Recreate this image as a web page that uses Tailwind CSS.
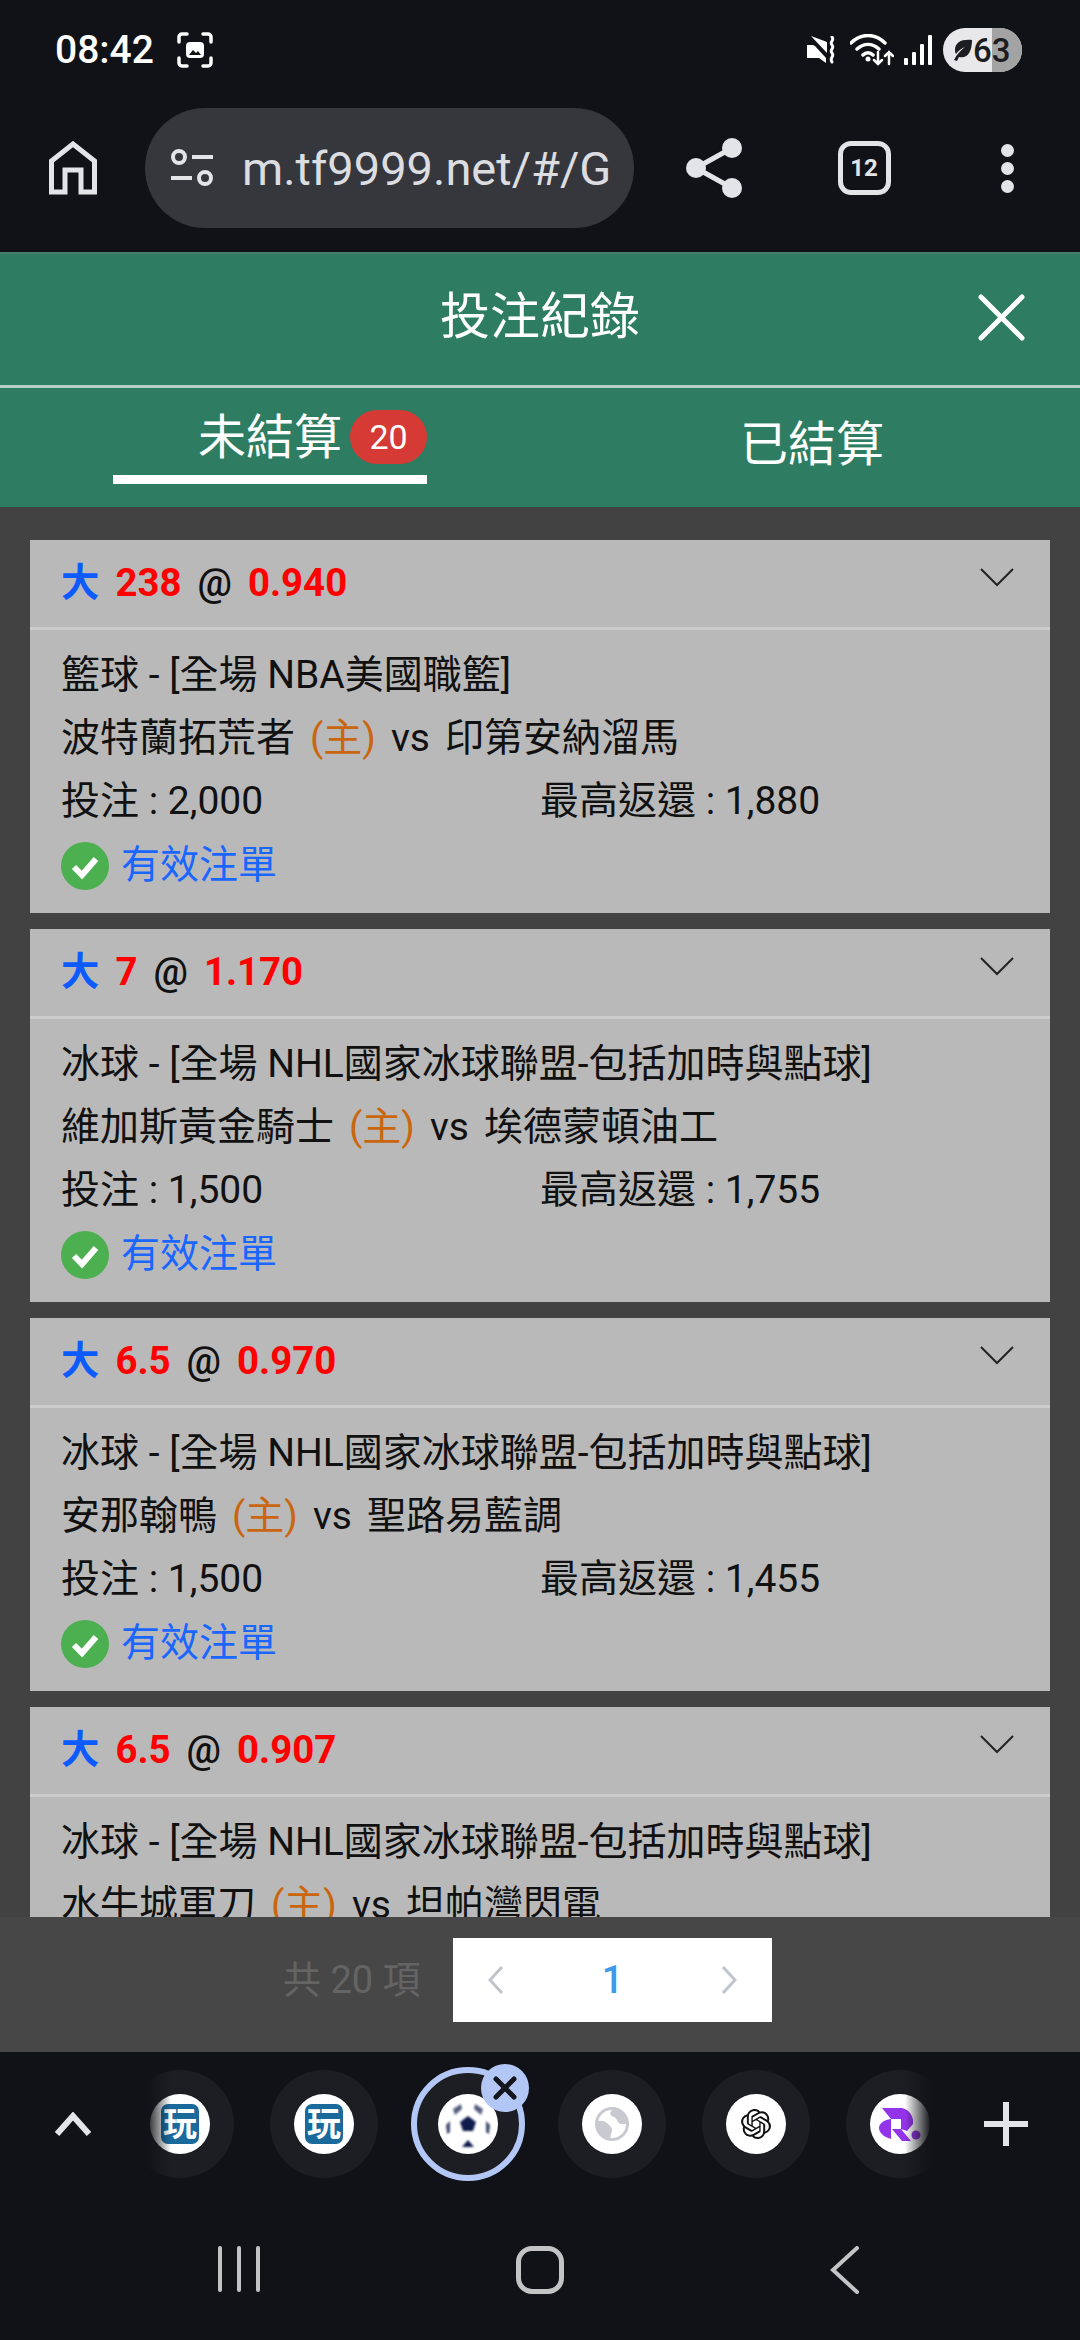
<!DOCTYPE html>
<html lang="zh-Hant">
<head>
  <meta charset="UTF-8" />
  <meta name="viewport" content="width=device-width, initial-scale=1.0"/>
  <title>投注紀錄</title>
  <script src="https://cdn.jsdelivr.net/npm/@tailwindcss/browser@4"></script>
</head>
<body class="bg-[#101217] font-['Roboto','Noto_Sans_CJK_TC',sans-serif]">
<div class="w-[1080px] h-[2340px] flex flex-col overflow-hidden">

  <!-- status bar -->
  <div class="h-[92px] shrink-0 flex items-start justify-between pt-[28px] pl-[55px] pr-[58px] text-white">
    <div class="flex items-center gap-[23px] h-[44px]">
      <span class="text-[39px] font-medium leading-none">08:42</span>
      <svg class="w-[36px] h-[36px]" viewBox="0 0 36 36" fill="none" stroke="#fff" stroke-width="3.5" stroke-linecap="round">
        <path d="M2 10V5a3 3 0 0 1 3-3h5M26 2h5a3 3 0 0 1 3 3v5M34 26v5a3 3 0 0 1-3 3h-5M10 34H5a3 3 0 0 1-3-3v-5"/>
        <rect x="9" y="10" width="18" height="16" rx="4" fill="#fff" stroke="none"/>
        <path d="M12 23l4-5 3 3 2-2 3 4z" fill="#101217" stroke="none"/>
      </svg>
    </div>
    <div class="flex items-center h-[44px]">
      <svg class="w-[31px] h-[28px] mr-[12px]" viewBox="0 0 31 28" fill="#fff">
        <path d="M0 9h6l2 1 11 12v5l-7-5H0z"/><path d="M4 0l16 17V6z"/>
        <path d="M25 1c3 3-3 5 0 8s-3 5 0 8-3 5 0 9" fill="none" stroke="#fff" stroke-width="3" stroke-linecap="round"/>
      </svg>
      <svg class="w-[44px] h-[32px] mr-[10px]" viewBox="0 0 44 32" fill="none" stroke="#fff" stroke-width="3.5" stroke-linecap="round">
        <path d="M1 9c10-10 24-10 34 0M7 15c7-6 15-6 22 0M13 21c3-3 7-3 10 0"/>
        <circle cx="18" cy="25" r="2.5" fill="#fff" stroke="none"/>
        <path stroke-width="2.5" d="M28 18v12m-4-4l4 4 4-4M39 30V18m-4 4l4-4 4 4"/>
      </svg>
      <svg class="w-[28px] h-[30px] mr-[11px]" viewBox="0 0 28 30" fill="#fff">
        <rect x="0" y="23" width="4" height="7" rx="1"/><rect x="8" y="17" width="4" height="13" rx="1"/>
        <rect x="16" y="9" width="4" height="21" rx="1"/><rect x="24" y="0" width="4" height="30" rx="1"/>
      </svg>
      <div class="relative w-[79px] h-[44px] rounded-full overflow-hidden bg-[#e8e8ea] flex items-center">
        <div class="absolute right-0 inset-y-0 w-[30px] bg-[#a3a3a3]"></div>
        <svg class="relative ml-[7px] w-[22px] h-[22px]" viewBox="0 0 22 22" fill="#1c1d20">
          <path d="M22 1C12 0 5 3 5 11c0 2 .5 3 1 4 3-4 6-6 9-7-4 3-8 7-11 13l3 1 2-4c9 2 13-6 13-17z"/>
        </svg>
        <span class="relative ml-[1px] text-[#1c1d20] text-[33px] font-medium leading-none">63</span>
      </div>
    </div>
  </div>

  <!-- browser toolbar -->
  <div class="h-[160px] shrink-0 flex items-center pb-[8px]">
    <div class="w-[145px] flex justify-center">
      <svg class="w-[48px] h-[54px]" viewBox="0 0 48 54" fill="none" stroke="#e3e4e8" stroke-width="5">
        <path d="M2.500 51V20L24 3l21.500 17v31H32V29H16v22z"/>
      </svg>
    </div>
    <div class="w-[489px] h-[120px] rounded-full bg-[#36373c] flex items-center pl-[25px] overflow-hidden">
      <svg class="w-[44px] h-[40px] shrink-0" viewBox="0 0 44 40" fill="none" stroke="#e3e4e8" stroke-width="4">
        <circle cx="9" cy="9" r="6"/><path d="M22 9h21M1 30h21"/><circle cx="35" cy="30" r="6"/>
      </svg>
      <span class="ml-[28px] text-[#dcdde1] text-[47px] whitespace-nowrap leading-none">m.tf9999.net/#/G</span>
    </div>
    <div class="w-[160px] flex justify-center">
      <svg class="w-[56px] h-[60px]" viewBox="0 0 56 60" fill="#e3e4e8">
        <circle cx="10" cy="30" r="10"/><circle cx="46" cy="10" r="10"/><circle cx="46" cy="50" r="10"/>
        <path d="M10 30L46 10M10 30l36 20" stroke="#e3e4e8" stroke-width="5"/>
      </svg>
    </div>
    <div class="w-[140px] flex justify-center">
      <div class="w-[53px] h-[54px] rounded-[13px] border-[5px] border-[#e3e4e8] flex items-center justify-center text-[#e3e4e8] text-[24px] font-bold leading-none">12</div>
    </div>
    <div class="w-[146px] flex flex-col items-center gap-[5px]">
      <div class="w-[13px] h-[13px] rounded-full bg-[#e3e4e8]"></div>
      <div class="w-[13px] h-[13px] rounded-full bg-[#e3e4e8]"></div>
      <div class="w-[13px] h-[13px] rounded-full bg-[#e3e4e8]"></div>
    </div>
  </div>

  <!-- page header -->
  <div class="h-[133px] shrink-0 bg-[#2e7d62] border-t-[2px] border-[#47806c] flex items-center relative">
    <h1 class="w-full text-center text-white text-[50px] font-normal leading-none -mt-[6px]">投注紀錄</h1>
    <svg class="absolute right-[55px] top-[40px] w-[47px] h-[47px]" viewBox="0 0 47 47" stroke="#fff" stroke-width="5" stroke-linecap="round">
      <path d="M3 3l41 41M44 3L3 44"/>
    </svg>
  </div>
  <div class="h-[3px] shrink-0 bg-[#b6cfc6]"></div>

  <!-- tabs -->
  <div class="h-[119px] shrink-0 bg-[#2e7d62] flex text-white text-[48px] leading-none">
    <div class="relative ml-[113px] w-[314px] h-[96px] border-b-[9px] border-white flex items-start pl-[85px] pt-[25px]">
      <span class="leading-[50px]">未結算</span>
      <span class="ml-[8px] -mt-[3px] w-[77px] h-[54px] rounded-[27px] bg-[#d63a35] text-[34px] flex items-center justify-center">20</span>
    </div>
    <div class="ml-[313px] pt-[32px] leading-[50px]">已結算</div>
  </div>

  <!-- bet list -->
  <div class="flex-1 bg-[#424242] overflow-hidden min-h-0">
    <div class="px-[30px] pt-[33px] flex flex-col gap-[16px] text-[39px] text-[#111] leading-none">

      <div class="h-[373px] shrink-0 bg-[#b9b9b9]">
        <div class="h-[90px] border-b-[3px] border-[#cbcbcb] flex items-center justify-between pl-[31px] pr-[36px] font-bold">
          <div class="flex gap-[16px] text-[38.400px]"><span class="text-[#0d5bff]">大</span><span class="text-[#ff0000]">238</span><span class="text-[#111] font-medium">@</span><span class="text-[#ff0000]">0.940</span></div>
          <svg class="w-[34px] h-[19px] -mt-[12px]" viewBox="0 0 34 19" fill="none" stroke="#222" stroke-width="2"><path d="M1 1l16 16L33 1"/></svg>
        </div>
        <div class="pl-[31px] pt-[14px]">
          <div class="h-[63px] flex items-center whitespace-pre">籃球 - [全場 NBA美國職籃]</div>
          <div class="h-[63px] flex items-center gap-[15px]"><span>波特蘭拓荒者</span><span class="text-[#c9660f]">(主)</span><span>vs</span><span>印第安納溜馬</span></div>
          <div class="h-[63px] flex items-center whitespace-pre"><span class="w-[479px]">投注 : 2,000</span><span>最高返還 : 1,880</span></div>
          <div class="h-[65px] flex items-center gap-[12px] text-[#1a66ff]">
            <svg class="w-[48px] h-[48px]" viewBox="0 0 48 48"><circle cx="24" cy="24" r="24" fill="#4caf50"/><path d="M13 25l8 8 14-16" fill="none" stroke="#fff" stroke-width="6"/></svg>
            有效注單
          </div>
        </div>
      </div>

      <div class="h-[373px] shrink-0 bg-[#b9b9b9]">
        <div class="h-[90px] border-b-[3px] border-[#cbcbcb] flex items-center justify-between pl-[31px] pr-[36px] font-bold">
          <div class="flex gap-[16px] text-[38.400px]"><span class="text-[#0d5bff]">大</span><span class="text-[#ff0000]">7</span><span class="text-[#111] font-medium">@</span><span class="text-[#ff0000]">1.170</span></div>
          <svg class="w-[34px] h-[19px] -mt-[12px]" viewBox="0 0 34 19" fill="none" stroke="#222" stroke-width="2"><path d="M1 1l16 16L33 1"/></svg>
        </div>
        <div class="pl-[31px] pt-[14px]">
          <div class="h-[63px] flex items-center whitespace-pre">冰球 - [全場 NHL國家冰球聯盟-包括加時與點球]</div>
          <div class="h-[63px] flex items-center gap-[15px]"><span>維加斯黃金騎士</span><span class="text-[#c9660f]">(主)</span><span>vs</span><span>埃德蒙頓油工</span></div>
          <div class="h-[63px] flex items-center whitespace-pre"><span class="w-[479px]">投注 : 1,500</span><span>最高返還 : 1,755</span></div>
          <div class="h-[65px] flex items-center gap-[12px] text-[#1a66ff]">
            <svg class="w-[48px] h-[48px]" viewBox="0 0 48 48"><circle cx="24" cy="24" r="24" fill="#4caf50"/><path d="M13 25l8 8 14-16" fill="none" stroke="#fff" stroke-width="6"/></svg>
            有效注單
          </div>
        </div>
      </div>

      <div class="h-[373px] shrink-0 bg-[#b9b9b9]">
        <div class="h-[90px] border-b-[3px] border-[#cbcbcb] flex items-center justify-between pl-[31px] pr-[36px] font-bold">
          <div class="flex gap-[16px] text-[38.400px]"><span class="text-[#0d5bff]">大</span><span class="text-[#ff0000]">6.5</span><span class="text-[#111] font-medium">@</span><span class="text-[#ff0000]">0.970</span></div>
          <svg class="w-[34px] h-[19px] -mt-[12px]" viewBox="0 0 34 19" fill="none" stroke="#222" stroke-width="2"><path d="M1 1l16 16L33 1"/></svg>
        </div>
        <div class="pl-[31px] pt-[14px]">
          <div class="h-[63px] flex items-center whitespace-pre">冰球 - [全場 NHL國家冰球聯盟-包括加時與點球]</div>
          <div class="h-[63px] flex items-center gap-[15px]"><span>安那翰鴨</span><span class="text-[#c9660f]">(主)</span><span>vs</span><span>聖路易藍調</span></div>
          <div class="h-[63px] flex items-center whitespace-pre"><span class="w-[479px]">投注 : 1,500</span><span>最高返還 : 1,455</span></div>
          <div class="h-[65px] flex items-center gap-[12px] text-[#1a66ff]">
            <svg class="w-[48px] h-[48px]" viewBox="0 0 48 48"><circle cx="24" cy="24" r="24" fill="#4caf50"/><path d="M13 25l8 8 14-16" fill="none" stroke="#fff" stroke-width="6"/></svg>
            有效注單
          </div>
        </div>
      </div>

      <div class="h-[373px] shrink-0 bg-[#b9b9b9]">
        <div class="h-[90px] border-b-[3px] border-[#cbcbcb] flex items-center justify-between pl-[31px] pr-[36px] font-bold">
          <div class="flex gap-[16px] text-[38.400px]"><span class="text-[#0d5bff]">大</span><span class="text-[#ff0000]">6.5</span><span class="text-[#111] font-medium">@</span><span class="text-[#ff0000]">0.907</span></div>
          <svg class="w-[34px] h-[19px] -mt-[12px]" viewBox="0 0 34 19" fill="none" stroke="#222" stroke-width="2"><path d="M1 1l16 16L33 1"/></svg>
        </div>
        <div class="pl-[31px] pt-[14px]">
          <div class="h-[63px] flex items-center whitespace-pre">冰球 - [全場 NHL國家冰球聯盟-包括加時與點球]</div>
          <div class="h-[63px] flex items-center gap-[15px]"><span>水牛城軍刀</span><span class="text-[#c9660f]">(主)</span><span>vs</span><span>坦帕灣閃電</span></div>
        </div>
      </div>

    </div>
  </div>

  <!-- pagination -->
  <div class="h-[135px] shrink-0 bg-[#474747] flex items-center pl-[283px] pb-[9px]">
    <span class="w-[170px] text-[#646464] text-[38px] leading-none">共 20 項</span>
    <div class="w-[319px] h-[84px] bg-white flex items-center justify-between px-[35px]">
      <svg class="w-[16px] h-[28px]" viewBox="0 0 16 28" fill="none" stroke="#c0c4cc" stroke-width="3"><path d="M14 1L2 14l12 13"/></svg>
      <span class="text-[#3f9bea] text-[38px] font-medium leading-none">1</span>
      <svg class="w-[16px] h-[28px]" viewBox="0 0 16 28" fill="none" stroke="#c0c4cc" stroke-width="3"><path d="M2 1l12 13L2 27"/></svg>
    </div>
  </div>

  <!-- tab strip -->
  <div class="h-[148px] shrink-0 flex items-start relative">
    <div class="w-[145px] h-[144px] flex items-center justify-center">
      <svg class="w-[38px] h-[24px]" viewBox="0 0 38 24" fill="none" stroke="#e3e4e8" stroke-width="6"><path d="M3 22L19 4l16 18"/></svg>
    </div>
    <div class="relative w-[786px] h-[144px] overflow-hidden flex items-center gap-[36px] pl-0">
      <div class="-ml-[19px] w-[108px] h-[108px] shrink-0 rounded-full bg-[#1d1e23] flex items-center justify-center">
        <div class="w-[60px] h-[60px] rounded-full bg-white flex items-center justify-center">
          <div class="w-[38px] h-[40px] rounded-[7px] bg-[#1b6a9c] flex items-center justify-center text-white text-[34px] font-bold leading-none">玩</div>
        </div>
      </div>
      <div class="w-[108px] h-[108px] shrink-0 rounded-full bg-[#1d1e23] flex items-center justify-center">
        <div class="w-[60px] h-[60px] rounded-full bg-white flex items-center justify-center">
          <div class="w-[38px] h-[40px] rounded-[7px] bg-[#1b6a9c] flex items-center justify-center text-white text-[34px] font-bold leading-none">玩</div>
        </div>
      </div>
      <div class="relative w-[108px] h-[108px] shrink-0 rounded-full bg-[#1d1e23] flex items-center justify-center">
        <div class="absolute -inset-[3px] rounded-full border-[6px] border-[#b3c7f7]"></div>
        <div class="w-[60px] h-[60px] rounded-full bg-white flex items-center justify-center overflow-hidden">
          <svg class="w-[46px] h-[46px] blur-[1px]" viewBox="0 0 46 46" fill="#0f1b4d">
            <polygon points="23,15 31,21 28,30 18,30 15,21"/>
            <polygon points="8,8 16,3 17,8 10,14" opacity=".7"/>
            <polygon points="38,8 30,3 29,8 36,14" opacity=".7"/>
            <polygon points="1,24 5,20 5,31 2,33" opacity=".8"/>
            <polygon points="45,24 41,20 41,31 44,33" opacity=".8"/>
            <polygon points="17,46 23,39 29,46"/>
          </svg>
        </div>
        <div class="absolute left-[67px] -top-[6px] w-[48px] h-[48px] rounded-full bg-[#b3c7f7] flex items-center justify-center">
          <svg class="w-[24px] h-[24px]" viewBox="0 0 24 24" stroke="#14161c" stroke-width="5" stroke-linecap="round"><path d="M3 3l18 18M21 3L3 21"/></svg>
        </div>
      </div>
      <div class="w-[108px] h-[108px] shrink-0 rounded-full bg-[#1d1e23] flex items-center justify-center">
        <div class="w-[60px] h-[60px] rounded-full bg-white flex items-center justify-center">
          <svg class="w-[34px] h-[34px]" viewBox="0 0 34 34" fill="#c9cad1">
            <circle cx="17" cy="17" r="15.500" fill="#fff" stroke="#c9cad1" stroke-width="3"/>
            <path d="M19 2C14 4 14 9 19 10c3 1 3 6 7 7h7A16 16 0 0 0 19 2z"/>
            <path d="M1 15c5-3 11 0 13 3 3 2 4 6 2 9l-1 5A16 16 0 0 1 1 15z"/>
          </svg>
        </div>
      </div>
      <div class="w-[108px] h-[108px] shrink-0 rounded-full bg-[#1d1e23] flex items-center justify-center">
        <div class="w-[60px] h-[60px] rounded-full bg-white flex items-center justify-center">
          <svg class="w-[30px] h-[30px]" viewBox="0 0 24 24" fill="#111"><path d="M22.2819 9.8211a5.9847 5.9847 0 0 0-.5157-4.9108 6.0462 6.0462 0 0 0-6.5098-2.9A6.0651 6.0651 0 0 0 4.9807 4.1818a5.9847 5.9847 0 0 0-3.9977 2.9 6.0462 6.0462 0 0 0 .7427 7.0966 5.98 5.98 0 0 0 .511 4.9107 6.051 6.051 0 0 0 6.5146 2.9001A5.9847 5.9847 0 0 0 13.2599 24a6.0557 6.0557 0 0 0 5.7718-4.2058 5.9894 5.9894 0 0 0 3.9977-2.9001 6.0557 6.0557 0 0 0-.7475-7.0729zm-9.022 12.6081a4.4755 4.4755 0 0 1-2.8764-1.0408l.1419-.0804 4.7783-2.7582a.7948.7948 0 0 0 .3927-.6813v-6.7369l2.02 1.1686a.071.071 0 0 1 .038.052v5.5826a4.504 4.504 0 0 1-4.4945 4.4944zm-9.6607-4.1254a4.4708 4.4708 0 0 1-.5346-3.0137l.142.0852 4.783 2.7582a.7712.7712 0 0 0 .7806 0l5.8428-3.3685v2.3324a.0804.0804 0 0 1-.0332.0615L9.74 19.9502a4.4992 4.4992 0 0 1-6.1408-1.6464zM2.3408 7.8956a4.485 4.485 0 0 1 2.3655-1.9728V11.6a.7664.7664 0 0 0 .3879.6765l5.8144 3.3543-2.0201 1.1685a.0757.0757 0 0 1-.071 0l-4.8303-2.7865A4.504 4.504 0 0 1 2.3408 7.872zm16.5963 3.8558L13.1038 8.364 15.1192 7.2a.0757.0757 0 0 1 .071 0l4.8303 2.7913a4.4944 4.4944 0 0 1-.6765 8.1042v-5.6772a.79.79 0 0 0-.407-.667zm2.0107-3.0231l-.142-.0852-4.7735-2.7818a.7759.7759 0 0 0-.7854 0L9.409 9.2297V6.8974a.0662.0662 0 0 1 .0284-.0615l4.8303-2.7866a4.4992 4.4992 0 0 1 6.6802 4.66zM8.3065 12.863l-2.02-1.1638a.0804.0804 0 0 1-.038-.0567V6.0742a4.4992 4.4992 0 0 1 7.3757-3.4537l-.142.0805L8.704 5.459a.7948.7948 0 0 0-.3927.6813zm1.0976-2.3654l2.602-1.4998 2.6069 1.4998v2.9994l-2.5974 1.4997-2.6067-1.4997Z"/></svg>
        </div>
      </div>
      <div class="w-[108px] h-[108px] shrink-0 rounded-full bg-[#1d1e23] flex items-center justify-center">
        <div class="w-[60px] h-[60px] rounded-full bg-white flex items-center justify-center">
          <svg class="w-[42px] h-[34px]" viewBox="0 0 42 34" fill="#9333ea">
            <path d="M3 1h20c8 2 12 9 11 16l-6 7-6-2V12H12z"/>
            <path d="M12 12v20C4 30 0 25 0 21c0-4 4-8 12-9z"/>
            <path d="M13 22h9l10 12h-9z"/>
            <circle cx="37" cy="28" r="4.500"/>
          </svg>
        </div>
      </div>
      <div class="absolute left-0 inset-y-0 w-[26px] bg-gradient-to-r from-[#101217] to-transparent"></div>
      <div class="absolute right-0 inset-y-0 w-[26px] bg-gradient-to-l from-[#101217] to-transparent"></div>
    </div>
    <div class="w-[149px] h-[144px] flex items-center justify-center">
      <svg class="w-[44px] h-[44px]" viewBox="0 0 44 44" fill="#e3e4e8"><rect x="19" y="0" width="6" height="44"/><rect x="0" y="19" width="44" height="6"/></svg>
    </div>
  </div>

  <!-- system nav -->
  <div class="h-[140px] shrink-0 flex items-start pt-[46px]">
    <div class="w-[360px] flex justify-end">
      <div class="mr-[100px] flex gap-[15px]">
        <div class="w-[4px] h-[46px] rounded-full bg-[#c4c4c6]"></div>
        <div class="w-[4px] h-[46px] rounded-full bg-[#c4c4c6]"></div>
        <div class="w-[4px] h-[46px] rounded-full bg-[#c4c4c6]"></div>
      </div>
    </div>
    <div class="w-[360px] flex justify-center">
      <div class="w-[48px] h-[48px] rounded-[16px] border-[5px] border-[#c4c4c6]"></div>
    </div>
    <div class="w-[360px] pl-[110px]">
      <svg class="w-[30px] h-[48px]" viewBox="0 0 30 48" fill="none" stroke="#c4c4c6" stroke-width="4" stroke-linecap="round"><path d="M27 2L3 24l24 22"/></svg>
    </div>
  </div>

</div>
</body>
</html>
